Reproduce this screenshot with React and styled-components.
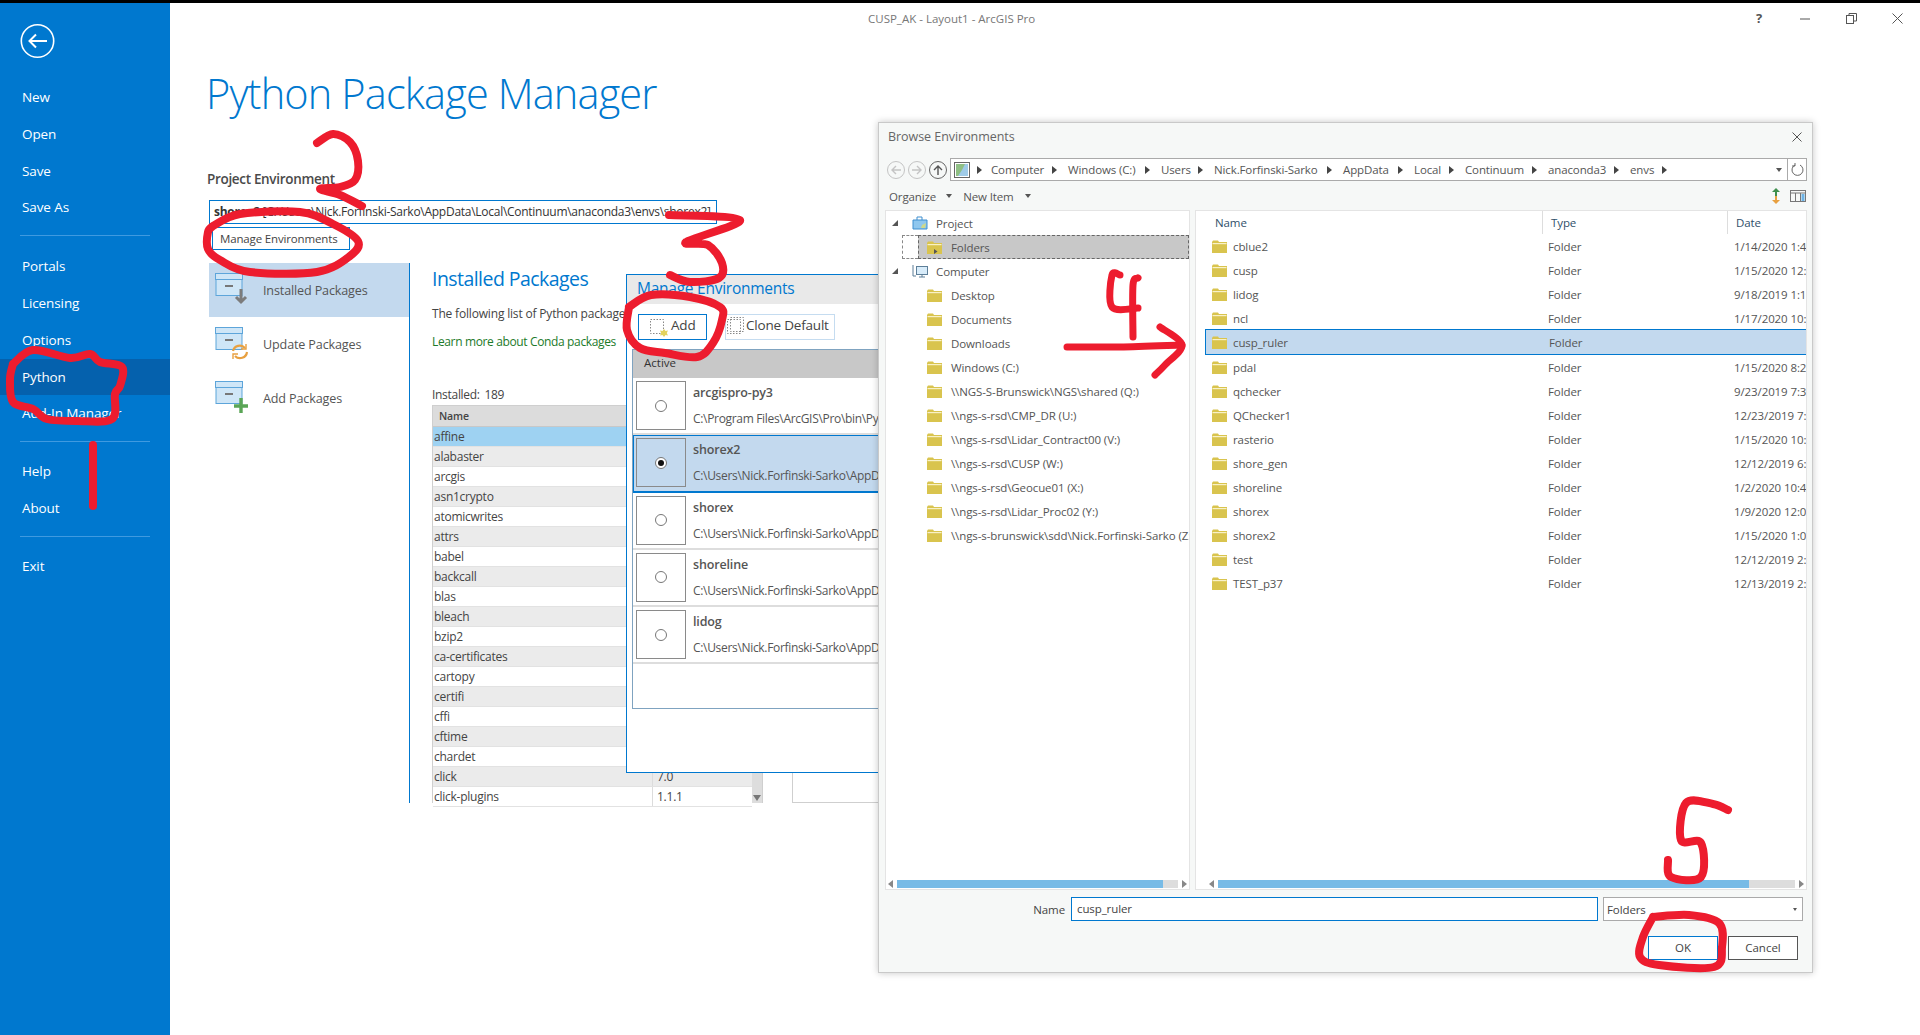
import React from 'react';
import styled, { createGlobalStyle } from 'styled-components';

const BLUE = '#0078cf';
const FONT = '"Open Sans", "Noto Sans", sans-serif';

const Global = createGlobalStyle`
  html, body { margin: 0; padding: 0; height: 100%; background: #fff; overflow: hidden; }
  body { font-family: ${FONT}; color: #444; }
  * { box-sizing: border-box; }
`;

const Page = styled.div`
  position: relative; width: 1920px; height: 1035px; overflow: hidden;
  border-top: 3px solid #000; display: flex; background: #fff;
`;
const Sidebar = styled.nav`
  width: 170px; flex: none; background: ${BLUE}; color: #fff; display: flex; flex-direction: column; padding-top: 21px;
`;
const BackButton = styled.div`
  margin-left: 20px; width: 35px; height: 34px; margin-bottom: 21px;
  svg { display: block; }
`;
const MenuItem = styled.div`
  height: 36.8px; line-height: 36.8px; padding-left: 22px; font-size: 13.5px; letter-spacing: -0.1px; color: #fff;
  background: ${p => (p.$active ? '#0561ad' : 'transparent')};
`;
const MenuDivider = styled.div`
  height: 1px; margin: 9px 20px ${p => p.$after || 11}px; background: #3f9ae0;
`;
const Main = styled.main`
  flex: 1; display: flex; flex-direction: column; min-width: 0;
`;
const TitleBar = styled.header`
  height: 30px; display: flex; align-items: center; padding-left: 698px; font-size: 11.5px; color: #777;
`;
const WindowControls = styled.div`
  margin-left: auto; display: flex; color: #555;
`;
const WindowControl = styled.div`
  width: 46px; height: 30px; display: flex; align-items: center; justify-content: center; font-size: 13px; font-weight: 700;
`;
const PageTitle = styled.h1`
  margin: 32px 0 0 36px; font-size: 41.5px; line-height: 56px; font-weight: 300; color: ${BLUE}; letter-spacing: -0.85px;
`;
const EnvLabel = styled.div`
  margin: 49px 0 0 37px; font-size: 13.5px; line-height: 19px; font-weight: 600; color: #4a4a4a; letter-spacing: -0.32px;
`;
const EnvCombo = styled.div`
  margin: 11px 0 0 39px; width: 508px; height: 24px; border: 1px solid ${BLUE}; font-size: 12px; line-height: 22px;
  padding-left: 4px; white-space: nowrap; overflow: hidden; color: #333; letter-spacing: -0.27px;
  b { font-weight: 700; }
`;
const ManageButton = styled.div`
  margin: 3px 0 0 42px; width: 138px; height: 23px; border: 1px solid ${BLUE}; background: #fff; font-size: 11.5px;
  line-height: 21px; padding-left: 7px; color: #444; letter-spacing: -0.15px;
`;
const Body = styled.div`
  margin: 13px 0 0 39px; height: 540px; display: flex;
`;
const SideNav = styled.div`
  width: 201px; flex: none; border-right: 1px solid ${BLUE};
`;
const SideNavItem = styled.div`
  height: 54px; display: flex; align-items: center; gap: 14px; padding-left: 6px; font-size: 12.6px; letter-spacing: -0.15px;
  color: #555; background: ${p => (p.$active ? '#c3d9ee' : 'transparent')};
  svg { flex: none; margin-top: -2px; }
`;
const Content = styled.section`
  padding-left: 22px; flex: 1; min-width: 0;
`;
const Heading = styled.h2`
  margin: 0; font-size: 19.5px; line-height: 32px; font-weight: 400; color: ${BLUE}; letter-spacing: -0.55px;
`;
const Para = styled.div`
  margin-top: 10px; font-size: 12px; line-height: 18px; color: #444; white-space: nowrap; letter-spacing: -0.18px;
`;
const LearnLink = styled(Para)`
  color: #1c7a2a; letter-spacing: -0.36px;
`;
const Count = styled(Para)`
  margin-top: 35px; word-spacing: 2px; letter-spacing: -0.3px;
`;
const TableRow = styled.div`
  margin-top: 1px; display: flex; gap: 29px;
`;
const PkgTable = styled.div`
  width: 331px; height: 398px; flex: none; border: 1px solid #cfcfcf; border-bottom: 0; display: flex;
`;
const PkgColumn = styled.div`
  width: 319px; flex: none;
`;
const PkgHeader = styled.div`
  height: 21px; background: #dcdcdc; border-bottom: 1px solid #c8c8c8; padding-left: 6px; font-size: 10.5px; line-height: 20px; font-weight: 600; color: #444; letter-spacing: -0.1px;
`;
const PkgRow = styled.div`
  height: 20px; display: grid; grid-template-columns: 219px 1fr; font-size: 12px; line-height: 19px; letter-spacing: -0.25px; color: #444;
  background: ${p => (p.$selected ? '#9ed2f2' : p.$alt ? '#ebebeb' : '#fff')};
  border-bottom: 1px solid #e2e2e2;
  span { padding-left: 1px; overflow: hidden; }
  span + span { border-left: 1px solid #dcdcdc; padding-left: 4px; }
`;
const PkgScroll = styled.div`
  width: 10px; margin-top: 22px; background: #ddd; position: relative;
  &::after { content: ''; position: absolute; left: 1px; bottom: 2px; border: 4px solid transparent; border-top: 6px solid #777; border-bottom: 0; }
`;
const DetailPanel = styled.div`
  width: 400px; flex: none; height: 398px; border: 1px solid #cfcfcf;
`;

const ManageDialog = styled.div`
  position: absolute; left: 626px; top: 271px; width: 400px; height: 499px; background: #fff; border: 1px solid ${BLUE}; z-index: 2;
`;
const ManageTitle = styled.div`
  height: 29px; background: #e9e9e9; padding-left: 10px; font-size: 15.5px; line-height: 27px; color: ${BLUE}; letter-spacing: -0.25px;
`;
const ManageBar = styled.div`
  height: 45px; display: flex; align-items: center; gap: 18px; padding: 0 0 0 11px;
`;
const BarButton = styled.div`
  display: flex; align-items: center; height: 26px; padding: 0 0 3px ${p => p.$pad}px; width: ${p => p.$w}px; gap: ${p => p.$gap}px; white-space: nowrap;
  border: 1px solid ${p => (p.$focus ? BLUE : '#c5dcf0')}; font-size: 13.5px; color: #444; letter-spacing: -0.2px;
  svg { margin-top: 3px; flex: none; }
`;
const EnvList = styled.div`
  margin-left: 5px; height: 360px; border: 1px solid #7fa3c0; border-right: 0;
`;
const EnvHead = styled.div`
  height: 28px; background: #c8c8c8; padding-left: 11px; font-size: 11.5px; line-height: 26px; color: #333;
`;
const EnvRow = styled.div`
  height: 57.3px; display: flex; padding: 3px 0 0 3px; margin-top: 0; white-space: nowrap;
  background: ${p => (p.$selected ? '#c3d9ee' : '#fff')};
  border-bottom: 2px solid #ddd;
  ${p => p.$selected && `outline: 1px solid ${BLUE}; outline-offset: -1px; border-bottom-color: ${BLUE};`}
`;
const RadioBox = styled.div`
  width: 50px; height: 49px; border: 1px solid #8a8a8a; display: flex; align-items: center; justify-content: center; flex: none;
`;
const Radio = styled.div`
  width: 12px; height: 12px; border-radius: 50%; border: 1px solid #777; background: #fff; display: flex; align-items: center; justify-content: center;
  &::after { content: ''; width: 6px; height: 6px; border-radius: 50%; background: ${p => (p.$on ? '#111' : 'transparent')}; }
`;
const EnvText = styled.div`
  margin-left: 7px; display: flex; flex-direction: column; padding-top: 3px;
`;
const EnvName = styled.div`
  font-size: 12.5px; font-weight: 600; line-height: 18px; color: #555; letter-spacing: -0.15px;
`;
const EnvPath = styled.div`
  margin-top: 9px; font-size: 12px; line-height: 16px; color: #555; letter-spacing: -0.32px;
`;

const BrowseDialog = styled.div`
  position: absolute; left: 878px; top: 119px; width: 935px; height: 851px; background: #f6f8f7; border: 1px solid #c9c9c9;
  box-shadow: 0 0 7px rgba(0,0,0,.22); z-index: 3; display: flex; flex-direction: column;
`;
const BrowseTitle = styled.div`
  height: 27px; flex: none; display: flex; align-items: center; justify-content: space-between; padding: 0 10px 0 9px;
  font-size: 12.5px; color: #666; letter-spacing: -0.05px;
`;
const AddressRow = styled.div`
  margin-top: 8px; height: 23px; flex: none; display: flex; align-items: center; padding-left: 8px;
`;
const NavCircle = styled.div`
  width: 18px; height: 18px; border-radius: 50%; margin-right: 3px; border: 1px solid ${p => (p.$on ? '#666' : '#c4c4c4')};
  color: ${p => (p.$on ? '#555' : '#c4c4c4')}; display: flex; align-items: center; justify-content: center;
`;
const AddressBox = styled.div`
  width: 838px; height: 23px; margin-left: 0; background: #fff; border: 1px solid #aaa; display: flex; align-items: center; padding-left: 3px; position: relative;
  font-size: 11.5px; letter-spacing: -0.12px; color: #555; white-space: nowrap;
`;
const Crumb = styled.div`
  width: ${p => p.$w}px; flex: none; display: flex; align-items: center; justify-content: space-between; padding-right: 11px;
`;
const ArrowRight = styled.i`
  width: 0; height: 0; border: 4px solid transparent; border-left: 5px solid #444; border-right: 0; flex: none;
  margin-right: ${p => p.$mr || 0}px;
`;
const CaretDown = styled.i`
  width: 0; height: 0; border: 3.5px solid transparent; border-top: 4px solid #555; border-bottom: 0; flex: none; display: block;
  margin-left: ${p => p.$ml || 0}px; margin-right: ${p => p.$mr || 0}px;
`;
const AddressCaret = styled(CaretDown)`
  margin-left: auto; margin-right: 5px;
`;
const RefreshBox = styled.div`
  width: 19px; height: 23px; background: #fff; border: 1px solid #aaa; border-left: 0; display: flex; align-items: center; justify-content: center;
`;
const ToolRow = styled.div`
  height: 24px; flex: none; margin: 3px 0 2px; display: flex; align-items: center; padding: 0 6px 0 10px; font-size: 11.5px; color: #555; letter-spacing: -0.12px;
`;
const ToolIcons = styled.div`
  margin-left: auto; display: flex; align-items: center; gap: 9px;
`;
const Panels = styled.div`
  height: 680px; flex: none; display: flex; gap: 5px; padding-left: 6px;
`;
const Panel = styled.div`
  width: ${p => p.$w}px; background: #fff; border: 1px solid #e4e4e4; display: flex; flex-direction: column;
`;
const PanelBody = styled.div`
  flex: 1; overflow: hidden; min-height: 0; font-size: 11.5px; letter-spacing: -0.1px; color: #555;
`;
const TreeRow = styled.div`
  height: 24px; display: flex; align-items: center; padding-left: ${p => p.$indent}px; white-space: nowrap; position: relative;
  ${p => p.$selected && `
    background: #c8c8c8; margin: 0 0 0 32px; padding-left: ${p.$indent - 32}px;
    outline: 1px dashed #666; outline-offset: -1px;
  `}
  svg { flex: none; }
`;
const TreeGhost = styled.div`
  position: absolute; left: -16px; top: 0; width: 16px; height: 24px; border: 1px dashed #888; border-right: 0;
`;
const TreeCaret = styled.i`
  width: 0; height: 0; flex: none; border-style: solid; border-width: 0 0 6px 6px; border-color: transparent transparent #555 transparent; margin-right: 14px;
`;
const RowLabel = styled.span`
  margin-left: ${p => p.$ml}px;
`;
const ColHead = styled.div`
  height: 23px; flex: none; display: grid; grid-template-columns: 346px 185px 1fr; font-size: 11.5px; line-height: 23px; color: #2f4f6a; letter-spacing: -0.1px;
  span { padding-left: 19px; }
  span + span { border-left: 1px solid #ddd; padding-left: 8px; }
`;
const FileRow = styled.div`
  margin-left: 9px; height: ${p => (p.$selected ? 26 : 24)}px; display: grid; grid-template-columns: 337px 185px 1fr; align-items: center; white-space: nowrap;
  ${p => p.$selected && `background: #c3d9ee; border: 1px solid ${BLUE}; border-right: 0; border-width: 1px 0 1px 1px; margin-top: -1px;`}
`;
const FileName = styled.div`
  display: flex; align-items: center; padding-left: ${p => (p.$selected ? 6 : 7)}px;
`;
const FileCell = styled.div`
  padding-left: ${p => p.$pad}px; overflow: hidden;
`;
const HScroll = styled.div`
  height: 8px; flex: none; margin: 0 2px 1px ${p => p.$ml}px; display: flex; align-items: center; gap: 2px;
`;
const ScrollArrow = styled.i`
  width: 0; height: 0; flex: none; border: 4px solid transparent;
  ${p => (p.$left ? 'border-right: 5px solid #888; border-left: 0;' : 'border-left: 5px solid #888; border-right: 0;')}
`;
const ScrollTrack = styled.div`
  flex: 1; height: 8px; background: #ddd; margin: 0 2px;
`;
const ScrollThumb = styled.div`
  height: 8px; width: ${p => p.$pct}%; background: #78bbe6;
`;
const NameRow = styled.div`
  margin-top: 7px; height: 24px; flex: none; display: flex; align-items: center; justify-content: flex-end; padding-right: 9px; gap: 5px;
  font-size: 11.5px; color: #444; letter-spacing: -0.1px;
`;
const NameInput = styled.div`
  width: 527px; height: 24px; background: #fff; border: 1px solid ${BLUE}; padding-left: 5px; line-height: 22px; margin-left: 1px;
`;
const TypeSelect = styled.div`
  width: 200px; height: 24px; background: #fff; border: 1px solid #aaa; padding: 0 5px 0 3px; display: flex; align-items: center; justify-content: space-between;
`;
const SmallCaret = styled.i`
  width: 0; height: 0; border: 2px solid transparent; border-top: 3px solid #555; border-bottom: 0;
`;
const ButtonRow = styled.div`
  margin-top: 15px; display: flex; justify-content: flex-end; gap: 10px; padding-right: 14px;
`;
const DialogButton = styled.div`
  width: 70px; height: 24px; background: #fff; border: 1px solid ${p => (p.$primary ? BLUE : '#555')}; text-align: center; line-height: 22px; font-size: 11.5px; color: #444;
`;
const Annotations = styled.svg`
  position: absolute; left: 0; top: -3px; width: 1920px; height: 1035px; z-index: 10; pointer-events: none;
`;

function smooth(pts) {
  let d = `M${pts[0][0]} ${pts[0][1]}`;
  for (let i = 0; i < pts.length - 1; i++) {
    const p0 = pts[i - 1] || pts[i], p1 = pts[i], p2 = pts[i + 1], p3 = pts[i + 2] || p2;
    d += ` C${(p1[0] + (p2[0] - p0[0]) / 6).toFixed(1)} ${(p1[1] + (p2[1] - p0[1]) / 6).toFixed(1)} ${(p2[0] - (p3[0] - p1[0]) / 6).toFixed(1)} ${(p2[1] - (p3[1] - p1[1]) / 6).toFixed(1)} ${p2[0]} ${p2[1]}`;
  }
  return d;
}

const STROKES = [
  { w: 8, p: [[13,364],[33,350],[70,358],[90,354],[100,362],[122,367],[120,386],[115,394],[112,419],[77,421],[47,419],[33,409],[13,402],[10,379],[13,364]] },
  { w: 8, p: [[93,445],[93,506]] },
  { w: 8, p: [[317,143],[333,134],[350,142],[358,161],[355,180],[340,187],[320,189],[340,195],[362,206]] },
  { w: 8, p: [[213,226],[240,214],[300,212],[333,224],[358,241],[350,256],[317,272],[250,272],[220,260],[208,249],[208,232],[213,226]] },
  { w: 8, p: [[669,215],[740,220],[686,242],[708,245],[722,263],[719,278],[690,282],[670,275]] },
  { w: 8, p: [[629,307],[651,295],[690,297],[720,307],[722,320],[713,343],[697,357],[665,353],[640,348],[627,330],[629,307]] },
  { w: 7, p: [[1120,275],[1112,275],[1112,307],[1138,308]] },
  { w: 7, p: [[1138,278],[1133,285],[1133,337]] },
  { w: 7, p: [[1067,347],[1120,347],[1182,345]] },
  { w: 7, p: [[1160,327],[1182,345],[1165,365],[1155,375]] },
  { w: 8, p: [[1728,810],[1713,804],[1686,803],[1681,840],[1701,843],[1701,877],[1671,877],[1668,860]] },
  { w: 8, p: [[1653,917],[1689,915],[1719,923],[1722,947],[1714,967],[1659,965],[1640,957],[1643,937],[1653,917]] },
];

const Folder = ({ play }) => (
  <svg width="15" height="13" viewBox="0 0 15 13">
    <path d="M0 2 L1 0.5 H6 L7 2 H15 V13 H0 Z" fill="#d9c44e" />
    <path d="M0.5 3 H14.5 V4.2 H0.5 Z" fill="#f8f1c8" />
    {play && <path d="M7 8 L10.5 10.5 L7 13 Z" fill="#555" />}
  </svg>
);

const BoxIcon = ({ badge }) => (
  <svg width="34" height="34" viewBox="0 0 34 34">
    <rect x="1" y="7.5" width="26" height="16" fill="#cfe6f7" stroke="#5da5da" />
    <rect x="0.5" y="1.5" width="27" height="6" fill="#cfe6f7" stroke="#5da5da" />
    <rect x="10" y="13" width="8" height="2" fill="#777" />
    {badge === 'down' && <path d="M26 17 V29 M21 25 L26 30 L31 25" fill="none" stroke="#7c7c7c" strokeWidth="3" />}
    {badge === 'sync' && (
      <g fill="none" stroke="#e8a040" strokeWidth="2.2">
        <path d="M18 25 A7 7 0 0 1 30 22" />
        <path d="M32 26 A7 7 0 0 1 20 30" />
        <path d="M31 18 V23 H26 M18 33 V28 H23" strokeWidth="1.4" />
      </g>
    )}
    {badge === 'plus' && <path d="M26 18 V33 M19 26 H33" fill="none" stroke="#5aa556" strokeWidth="3.4" />}
  </svg>
);

const AddIcon = ({ clone }) => (
  <svg width="20" height="20" viewBox="0 0 20 20">
    <rect x="1.5" y="2.5" width="13" height="14" fill="none" stroke="#888" strokeDasharray="1.5 1.5" />
    {clone && <rect x="4.5" y="0.5" width="13" height="14" fill="none" stroke="#888" strokeDasharray="1.5 1.5" />}
    {!clone && <path d="M15 12 L16.5 14 L19 13.5 L17.8 16 L19 18.5 L16.5 18 L15 20 L13.5 18 L11 18.5 L12.2 16 L11 13.5 L13.5 14 Z" fill="#e3d25d" />}
  </svg>
);

const PACKAGES = ['affine','alabaster','arcgis','asn1crypto','atomicwrites','attrs','babel','backcall','blas','bleach','bzip2','ca-certificates','cartopy','certifi','cffi','cftime','chardet','click','click-plugins'];
const VERSIONS = { click: '7.0', 'click-plugins': '1.1.1' };
const USER_PATH = 'C:\\Users\\Nick.Forfinski-Sarko\\AppData\\Local\\Continuum\\anaconda3\\envs\\';
const ENVS = [
  { n: 'arcgispro-py3', p: 'C:\\Program Files\\ArcGIS\\Pro\\bin\\Python\\envs\\arcgispro-py3' },
  { n: 'shorex2', p: USER_PATH + 'shorex2', s: true },
  { n: 'shorex', p: USER_PATH + 'shorex' },
  { n: 'shoreline', p: USER_PATH + 'shoreline' },
  { n: 'lidog', p: USER_PATH + 'lidog' },
];
const CRUMBS = [['Computer',77],['Windows (C:)',93],['Users',53],['Nick.Forfinski-Sarko',129],['AppData',71],['Local',51],['Continuum',83],['anaconda3',82],['envs',48]];
const DRIVES = ['Desktop','Documents','Downloads','Windows (C:)','\\\\NGS-S-Brunswick\\NGS\\shared (Q:)','\\\\ngs-s-rsd\\CMP_DR (U:)','\\\\ngs-s-rsd\\Lidar_Contract00 (V:)','\\\\ngs-s-rsd\\CUSP (W:)','\\\\ngs-s-rsd\\Geocue01 (X:)','\\\\ngs-s-rsd\\Lidar_Proc02 (Y:)','\\\\ngs-s-brunswick\\sdd\\Nick.Forfinski-Sarko (Z:)'];
const FILES = [
  ['cblue2','1/14/2020 1:45 PM'],['cusp','1/15/2020 12:10 PM'],['lidog','9/18/2019 1:12 PM'],['ncl','1/17/2020 10:05 AM'],
  ['cusp_ruler','',true],['pdal','1/15/2020 8:27 AM'],['qchecker','9/23/2019 7:30 AM'],['QChecker1','12/23/2019 7:15 AM'],
  ['rasterio','1/15/2020 10:02 AM'],['shore_gen','12/12/2019 6:20 AM'],['shoreline','1/2/2020 10:41 AM'],['shorex','1/9/2020 12:03 PM'],
  ['shorex2','1/15/2020 1:04 PM'],['test','12/12/2019 2:16 PM'],['TEST_p37','12/13/2019 2:48 PM'],
];

export default function App() {
  return (
    <Page>
      <Global />
      <Sidebar>
        <BackButton>
          <svg width="35" height="34" viewBox="0 0 35 34" fill="none" stroke="#fff">
            <circle cx="17.5" cy="17" r="16.2" strokeWidth="1.6" />
            <path d="M27 17 H10 M16 10.5 L9.5 17 L16 23.5" strokeWidth="2" />
          </svg>
        </BackButton>
        {['New','Open','Save','Save As'].map(t => <MenuItem key={t}>{t}</MenuItem>)}
        <MenuDivider $after={12} />
        {['Portals','Licensing','Options'].map(t => <MenuItem key={t}>{t}</MenuItem>)}
        <MenuItem $active>Python</MenuItem>
        <MenuItem>Add-In Manager</MenuItem>
        <MenuDivider />
        {['Help','About'].map(t => <MenuItem key={t}>{t}</MenuItem>)}
        <MenuDivider />
        <MenuItem>Exit</MenuItem>
      </Sidebar>
      <Main>
        <TitleBar>
          CUSP_AK - Layout1 - ArcGIS Pro
          <WindowControls>
            <WindowControl>?</WindowControl>
            <WindowControl><svg width="11" height="11" viewBox="0 0 11 11"><path d="M0 6 H10" stroke="#555" /></svg></WindowControl>
            <WindowControl><svg width="11" height="11" viewBox="0 0 11 11" fill="none" stroke="#555"><rect x="0.5" y="2.5" width="7" height="8" /><path d="M3 2.5 V0.5 H10.5 V8 H7.5" /></svg></WindowControl>
            <WindowControl><svg width="11" height="11" viewBox="0 0 11 11" stroke="#555"><path d="M0.5 0.5 L10.5 10.5 M10.5 0.5 L0.5 10.5" /></svg></WindowControl>
          </WindowControls>
        </TitleBar>
        <PageTitle>Python Package Manager</PageTitle>
        <EnvLabel>Project Environment</EnvLabel>
        <EnvCombo><b>shorex2</b> [C:\Users\Nick.Forfinski-Sarko\AppData\Local\Continuum\anaconda3\envs\shorex2]</EnvCombo>
        <ManageButton>Manage Environments</ManageButton>
        <Body>
          <SideNav>
            <SideNavItem $active><BoxIcon badge="down" />Installed Packages</SideNavItem>
            <SideNavItem><BoxIcon badge="sync" />Update Packages</SideNavItem>
            <SideNavItem><BoxIcon badge="plus" />Add Packages</SideNavItem>
          </SideNav>
          <Content>
            <Heading>Installed Packages</Heading>
            <Para>The following list of Python packages are installed in the active environment</Para>
            <LearnLink>Learn more about Conda packages</LearnLink>
            <Count>Installed: 189</Count>
            <TableRow>
              <PkgTable>
                <PkgColumn>
                  <PkgHeader>Name</PkgHeader>
                  {PACKAGES.map((n, i) => (
                    <PkgRow key={n} $selected={i === 0} $alt={i % 2 === 1}>
                      <span>{n}</span><span>{VERSIONS[n] || ''}</span>
                    </PkgRow>
                  ))}
                </PkgColumn>
                <PkgScroll />
              </PkgTable>
              <DetailPanel />
            </TableRow>
          </Content>
        </Body>
      </Main>

      <ManageDialog>
        <ManageTitle>Manage Environments</ManageTitle>
        <ManageBar>
          <BarButton $focus $w={69} $pad={10} $gap={2}><AddIcon /><span>Add</span></BarButton>
          <BarButton $w={110} $pad={0} $gap={0}><AddIcon clone /><span>Clone Default</span></BarButton>
        </ManageBar>
        <EnvList>
          <EnvHead>Active</EnvHead>
          {ENVS.map(e => (
            <EnvRow key={e.n} $selected={e.s}>
              <RadioBox><Radio $on={e.s} /></RadioBox>
              <EnvText>
                <EnvName>{e.n}</EnvName>
                <EnvPath>{e.p}</EnvPath>
              </EnvText>
            </EnvRow>
          ))}
        </EnvList>
      </ManageDialog>

      <BrowseDialog>
        <BrowseTitle>
          Browse Environments
          <svg width="10" height="10" viewBox="0 0 10 10" stroke="#555"><path d="M0.5 0.5 L9.5 9.5 M9.5 0.5 L0.5 9.5" /></svg>
        </BrowseTitle>
        <AddressRow>
          <NavCircle><svg width="12" height="12" viewBox="0 0 12 12" fill="none" stroke="currentColor" strokeWidth="1.4"><path d="M11 6 H2 M6 2 L2 6 L6 10" /></svg></NavCircle>
          <NavCircle><svg width="12" height="12" viewBox="0 0 12 12" fill="none" stroke="currentColor" strokeWidth="1.4"><path d="M1 6 H10 M6 2 L10 6 L6 10" /></svg></NavCircle>
          <NavCircle $on><svg width="12" height="12" viewBox="0 0 12 12" fill="none" stroke="currentColor" strokeWidth="1.4"><path d="M6 11 V2 M2 6 L6 2 L10 6" /></svg></NavCircle>
          <AddressBox>
            <svg width="16" height="16" viewBox="0 0 16 16" style={{ marginRight: 7, flex: 'none' }}><rect x="0.5" y="0.5" width="15" height="15" fill="#fff" stroke="#666" /><path d="M2 2 H14 V14 H2 Z" fill="#9fcbe8" /><path d="M2 2 H11 L8 8 L4 14 H2 Z" fill="#8fbf84" /></svg>
            <ArrowRight $mr={9} />
            {CRUMBS.map(([t, w]) => <Crumb key={t} $w={w}><span>{t}</span><ArrowRight /></Crumb>)}
            <AddressCaret />
          </AddressBox>
          <RefreshBox><svg width="13" height="13" viewBox="0 0 13 13" fill="none" stroke="#666"><path d="M4 2 A5.5 5.5 0 1 0 9 2" /><path d="M4 0 V3 H1" /></svg></RefreshBox>
        </AddressRow>
        <ToolRow>
          Organize<CaretDown $ml={10} $mr={11} />New Item<CaretDown $ml={11} />
          <ToolIcons>
            <svg width="10" height="16" viewBox="0 0 10 16"><path d="M5 0 L9 4 H6 V8 H4 V4 H1 Z" fill="#3f8f4e" /><path d="M5 16 L9 12 H6 V8 H4 V12 H1 Z" fill="#e8a040" /></svg>
            <svg width="16" height="12" viewBox="0 0 16 12" fill="none" stroke="#777"><rect x="0.5" y="0.5" width="15" height="11" /><path d="M0.5 3 H15.5 M5.5 3 V11.5 M10.5 3 V11.5" /><rect x="11.5" y="4" width="3" height="7" fill="#6db3e6" stroke="none" /></svg>
          </ToolIcons>
        </ToolRow>
        <Panels>
          <Panel $w={305}>
            <PanelBody>
              <TreeRow $indent={6}><TreeCaret /><svg width="16" height="14" viewBox="0 0 16 14"><path d="M1 4 H15 V13 H1 Z" fill="#8fc7ee" stroke="#3f8fcf" /><path d="M5 4 V1 H10 V4" fill="none" stroke="#3f8fcf" /><path d="M10 9 L14 7 L13 12 H9 Z" fill="#cfd98a" /></svg><RowLabel $ml={8}>Project</RowLabel></TreeRow>
              <TreeRow $indent={41} $selected><TreeGhost /><Folder play /><RowLabel $ml={9}>Folders</RowLabel></TreeRow>
              <TreeRow $indent={6}><TreeCaret /><svg width="16" height="14" viewBox="0 0 16 14" fill="none" stroke="#5d7f99"><rect x="4.5" y="2.5" width="11" height="8" fill="#d8ecfa" /><path d="M1 1 V12 H4 M7 13 H13 M10 10.5 V13" /></svg><RowLabel $ml={8}>Computer</RowLabel></TreeRow>
              {DRIVES.map(d => (
                <TreeRow key={d} $indent={41}><Folder /><RowLabel $ml={9}>{d}</RowLabel></TreeRow>
              ))}
            </PanelBody>
            <HScroll $ml={2}>
              <ScrollArrow $left />
              <ScrollTrack><ScrollThumb $pct={94.7} /></ScrollTrack>
              <ScrollArrow />
            </HScroll>
          </Panel>
          <Panel $w={612}>
            <ColHead><span>Name</span><span>Type</span><span>Date</span></ColHead>
            <PanelBody>
              {FILES.map(([n, d, sel]) => (
                <FileRow key={n} $selected={sel}>
                  <FileName $selected={sel}><Folder /><RowLabel $ml={6}>{n}</RowLabel></FileName>
                  <FileCell $pad={6}>Folder</FileCell>
                  <FileCell $pad={7}>{d}</FileCell>
                </FileRow>
              ))}
            </PanelBody>
            <HScroll $ml={13}>
              <ScrollArrow $left />
              <ScrollTrack><ScrollThumb $pct={92} /></ScrollTrack>
              <ScrollArrow />
            </HScroll>
          </Panel>
        </Panels>
        <NameRow>
          Name
          <NameInput>cusp_ruler</NameInput>
          <TypeSelect>Folders<SmallCaret /></TypeSelect>
        </NameRow>
        <ButtonRow>
          <DialogButton $primary>OK</DialogButton>
          <DialogButton>Cancel</DialogButton>
        </ButtonRow>
      </BrowseDialog>

      <Annotations viewBox="0 0 1920 1035" fill="none" stroke="#ed1c2e" strokeLinecap="round" strokeLinejoin="round">
        {STROKES.map((s, i) => <path key={i} d={smooth(s.p)} strokeWidth={s.w} />)}
      </Annotations>
    </Page>
  );
}
